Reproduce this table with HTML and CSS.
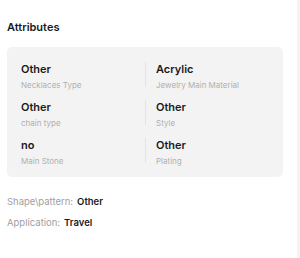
FILE: index.html
```html
<!DOCTYPE html>
<html lang="en">
<head>
    <meta charset="UTF-8">
    <title>Attributes</title>
    <link rel="stylesheet" href="styles.css">
</head>
<body>
    <div class="page">
        <div class="main">
            <h2 class="title">Attributes</h2>

            <!-- Key attributes -->
            <div class="attr-card">
                <div class="attr-item">
                    <div class="attr-value">Other</div>
                    <div class="attr-label">Necklaces Type</div>
                </div>
                <div class="attr-item">
                    <div class="attr-value">Acrylic</div>
                    <div class="attr-label">Jewelry Main Material</div>
                </div>
                <div class="attr-item">
                    <div class="attr-value">Other</div>
                    <div class="attr-label">chain type</div>
                </div>
                <div class="attr-item">
                    <div class="attr-value">Other</div>
                    <div class="attr-label">Style</div>
                </div>
                <div class="attr-item">
                    <div class="attr-value">no</div>
                    <div class="attr-label">Main Stone</div>
                </div>
                <div class="attr-item">
                    <div class="attr-value">Other</div>
                    <div class="attr-label">Plating</div>
                </div>
            </div>

            <!-- Other attributes -->
            <div class="extra-list">
                <div class="extra-row"><span class="extra-key">Shape\pattern:</span><span class="extra-val">Other</span></div>
                <div class="extra-row"><span class="extra-key">Application:</span><span class="extra-val">Travel</span></div>
            </div>
        </div>
        <div class="side"></div>
    </div>
</body>
</html>
```

FILE: styles.css
```css
* {
    margin: 0;
    padding: 0;
    box-sizing: border-box;
}

body {
    font-family: 'Inter', 'Noto Sans', sans-serif;
    background: #fff;
    color: #222;
    width: 300px;
    height: 258px;
    overflow: hidden;
}

.page {
    display: flex;
    height: 258px;
}

.main {
    flex: 1;
    padding: 20px 14px 0 7px;
}

.side {
    width: 3px;
    background: #f3f3f3;
}

.title {
    font-size: 11px;
    font-weight: 600;
    color: #1a1a1a;
    line-height: 14px;
    margin-bottom: 13px;
}

.attr-card {
    display: grid;
    grid-template-columns: 1fr 1fr;
    row-gap: 13px;
    background: #f3f3f3;
    border-radius: 5px;
    padding: 15px 14px 14px 14px;
}

.attr-item {
    height: 25px;
}

.attr-item:nth-child(even) {
    border-left: 1px solid #e3e3e3;
    padding-left: 10px;
}

.attr-value {
    font-size: 11px;
    font-weight: 600;
    color: #1a1a1a;
    line-height: 14px;
}

.attr-label {
    font-size: 8px;
    color: #b0b0b0;
    line-height: 10px;
    margin-top: 4px;
}

.extra-list {
    margin-top: 19px;
}

.extra-row {
    font-size: 9.5px;
    line-height: 12px;
    margin-bottom: 9px;
}

.extra-key {
    color: #a0a0a0;
    margin-right: 4px;
}

.extra-val {
    font-weight: 600;
    color: #1a1a1a;
}
```
